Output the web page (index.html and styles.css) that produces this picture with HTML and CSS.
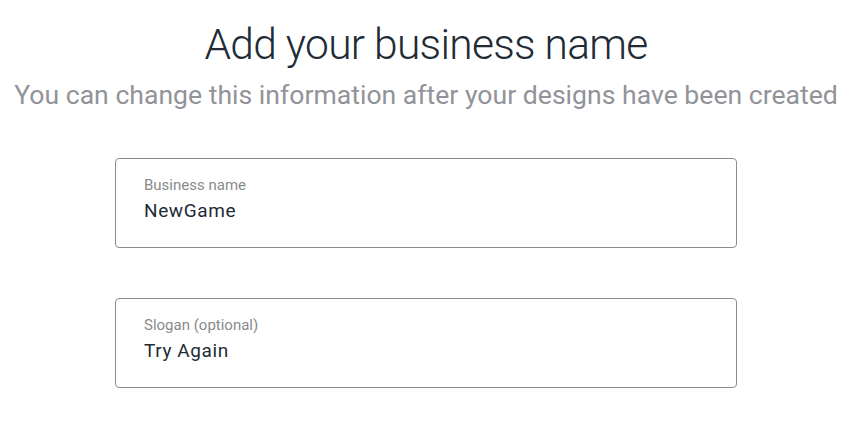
FILE: index.html
```html
<!DOCTYPE html>
<html>
<head>
<meta charset="utf-8">
<link rel="stylesheet" href="styles.css">
</head>
<body>
<div class="page">
  <h1 class="title">Add your business name</h1>
  <p class="subtitle">You can change this information after your designs have been created</p>
  <div class="fields">
    <div class="field">
      <div class="label">Business name</div>
      <div class="value">NewGame</div>
    </div>
    <div class="field">
      <div class="label">Slogan (optional)</div>
      <div class="value">Try Again</div>
    </div>
  </div>
</div>
</body>
</html>
```

FILE: styles.css
```css
html, body {
  margin: 0;
  padding: 0;
  background: #ffffff;
}
.page {
  width: 852px;
  display: flex;
  flex-direction: column;
  align-items: center;
  font-family: Roboto, "Liberation Sans", sans-serif;
}
.title {
  margin: 19px 0 0 0;
  font-size: 42.5px;
  font-weight: 300;
  letter-spacing: -0.7px;
  line-height: 52px;
  color: #212b36;
}
.subtitle {
  margin: 6px 0 0 0;
  font-size: 26.6px;
  font-weight: 400;
  line-height: 36px;
  color: #919398;
  white-space: nowrap;
}
.fields {
  margin-top: 45px;
  display: flex;
  flex-direction: column;
  gap: 50px;
}
.field {
  box-sizing: border-box;
  width: 622px;
  height: 90px;
  border: 1px solid #8c8c8c;
  border-radius: 4px;
  padding: 17px 28px 0 28px;
}
.label {
  font-size: 15px;
  line-height: 18px;
  color: #8a8a8a;
}
.value {
  margin-top: 5px;
  font-size: 19px;
  letter-spacing: 0.6px;
  line-height: 24px;
  color: #212b36;
}
```
